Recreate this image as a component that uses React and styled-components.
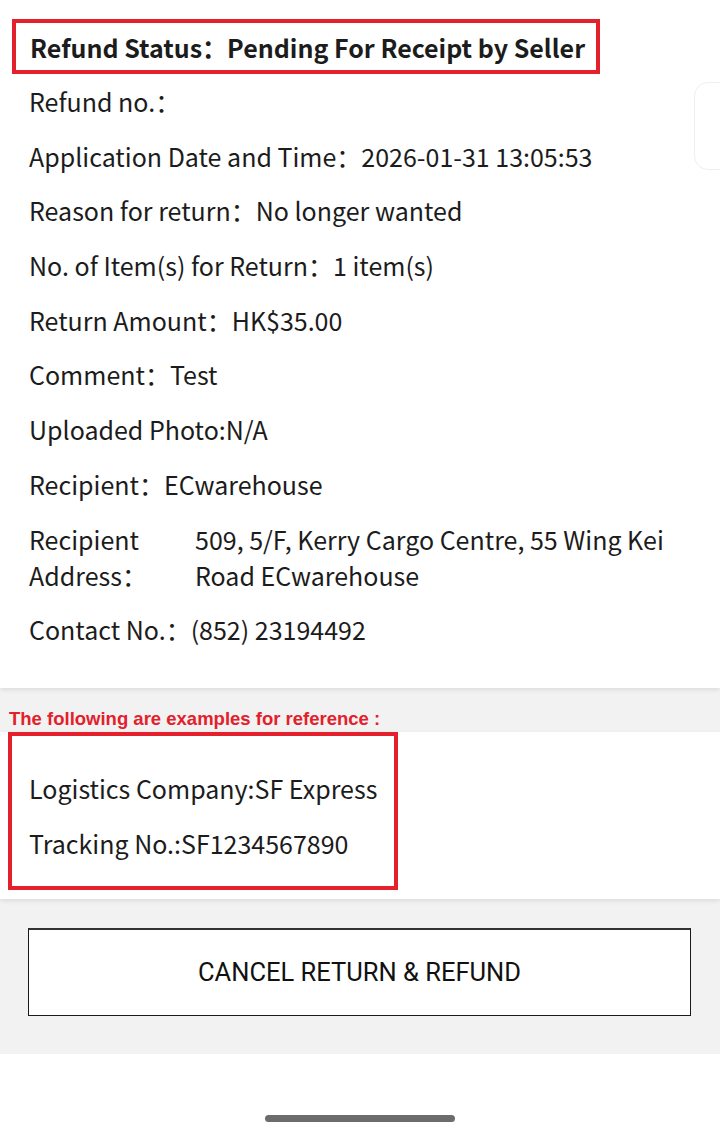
import React from "react";
import styled, { createGlobalStyle } from "styled-components";

const GlobalStyle = createGlobalStyle`
  html, body {
    margin: 0;
    padding: 0;
    background: #ffffff;
  }
  body {
    font-family: "Noto Sans CJK SC", "Noto Sans", sans-serif;
    color: #1c1c1c;
  }
`;

const Page = styled.div`
  position: relative;
  width: 720px;
  min-height: 1140px;
  display: flex;
  flex-direction: column;
  background: #ffffff;
  overflow: hidden;
`;

const InfoSection = styled.section`
  position: relative;
  background: #ffffff;
  padding: 19px 30px 41px 29px;
  box-shadow: 0 2px 5px rgba(0, 0, 0, 0.09);
  z-index: 1;
`;

const StatusBox = styled.div`
  width: fit-content;
  margin: 0 0 9px -17px;
  padding: 5.5px 11px 5.5px 14px;
  border: 4px solid #e3202b;
  font-size: 25px;
  line-height: 36px;
  font-weight: 700;
`;

const FieldList = styled.div`
  display: flex;
  flex-direction: column;
  gap: 18.7px;
`;

const Field = styled.div`
  font-size: 25px;
  line-height: 36px;
  white-space: nowrap;
`;

const AddressField = styled.div`
  display: grid;
  grid-template-columns: 166px 1fr;
  font-size: 25px;
  line-height: 36px;
`;

const PeekCard = styled.div`
  position: absolute;
  top: 82px;
  right: -40px;
  width: 64px;
  height: 86px;
  border: 1px solid #efefef;
  border-radius: 14px;
`;

const NoteBand = styled.div`
  background: #f2f2f2;
  height: 44px;
  display: flex;
  align-items: flex-end;
  padding: 0 9px 2px;
  box-sizing: border-box;
`;

const NoteText = styled.span`
  font-family: "Liberation Sans", Arial, sans-serif;
  font-weight: 700;
  font-size: 18.5px;
  line-height: 22px;
  color: #e3202b;
`;

const ExampleSection = styled.section`
  position: relative;
  background: #ffffff;
  padding: 0 0 9px 8px;
  box-shadow: 0 2px 5px rgba(0, 0, 0, 0.09);
  z-index: 1;
`;

const ExampleBox = styled.div`
  width: 390px;
  box-sizing: border-box;
  border: 4px solid #e3202b;
  padding: 34px 0 25px 17px;
  display: flex;
  flex-direction: column;
  gap: 18.7px;
`;

const ActionArea = styled.div`
  background: #f2f2f2;
  padding: 29px 29px 38px 28px;
`;

const CancelButton = styled.button`
  width: 100%;
  height: 88px;
  background: #ffffff;
  border: 1.5px solid #1a1a1a;
  border-top: 2px solid #333333;
  font-family: Roboto, "Liberation Sans", sans-serif;
  font-size: 25.5px;
  color: #111111;
  cursor: pointer;
`;

const HomeArea = styled.div`
  flex: 1;
  display: flex;
  align-items: flex-end;
  justify-content: center;
  padding-bottom: 18px;
`;

const HomeBar = styled.div`
  width: 190px;
  height: 7px;
  border-radius: 4px;
  background: #6c6c6c;
`;

const fields = [
  "Refund no.：",
  "Application Date and Time：2026-01-31 13:05:53",
  "Reason for return：No longer wanted",
  "No. of Item(s) for Return：1 item(s)",
  "Return Amount：HK$35.00",
  "Comment：Test",
  "Uploaded Photo:N/A",
  "Recipient：ECwarehouse",
];

export default function App() {
  return (
    <Page>
      <GlobalStyle />
      <InfoSection>
        <StatusBox>Refund Status：Pending For Receipt by Seller</StatusBox>
        <FieldList>
          {fields.map((text) => (
            <Field key={text}>{text}</Field>
          ))}
          <AddressField>
            <span>Recipient Address：</span>
            <span>509, 5/F, Kerry Cargo Centre, 55 Wing Kei Road ECwarehouse</span>
          </AddressField>
          <Field>Contact No.：(852) 23194492</Field>
        </FieldList>
        <PeekCard />
      </InfoSection>
      <NoteBand>
        <NoteText>The following are examples for reference :</NoteText>
      </NoteBand>
      <ExampleSection>
        <ExampleBox>
          <Field>Logistics Company:SF Express</Field>
          <Field>Tracking No.:SF1234567890</Field>
        </ExampleBox>
      </ExampleSection>
      <ActionArea>
        <CancelButton>CANCEL RETURN &amp; REFUND</CancelButton>
      </ActionArea>
      <HomeArea>
        <HomeBar />
      </HomeArea>
    </Page>
  );
}
